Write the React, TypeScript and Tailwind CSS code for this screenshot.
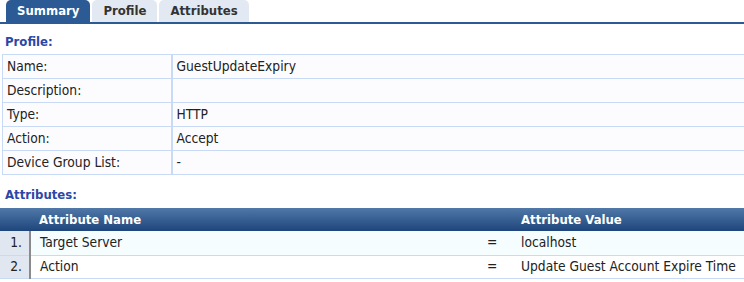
const profile = [
  { label: "Name:", value: "GuestUpdateExpiry" },
  { label: "Description:", value: "" },
  { label: "Type:", value: "HTTP" },
  { label: "Action:", value: "Accept" },
  { label: "Device Group List:", value: "-" },
];

const attributes = [
  { name: "Target Server", value: "localhost" },
  { name: "Action", value: "Update Guest Account Expire Time" },
];

const tabs = ["Summary", "Profile", "Attributes"];

export default function App() {
  return (
    <div className="w-[744px] h-[282px] overflow-hidden bg-white text-[13.7px] text-[#222] font-['DejaVu_Sans_Condensed','DejaVu_Sans',sans-serif]">
      <div className="flex items-end gap-[2px] pl-[6px] border-b-2 border-[#2b5a95] h-[24px] text-[13px]">
        {tabs.map((t, i) => (
          <div
            key={t}
            className={
              i === 0
                ? "h-[22px] px-[11px] flex items-center rounded-t-[5px] bg-[#2b5a95] text-white font-bold"
                : "h-[22px] px-[11px] flex items-center rounded-t-[5px] bg-[#e3e9f2] text-[#333] font-bold"
            }
          >
            {t}
          </div>
        ))}
      </div>

      <div className="pl-[5px] pt-[8px] h-[30px] font-bold text-[13px] text-[#2a48a6]">Profile:</div>

      <table className="ml-[2px] w-[742px] border-collapse bg-[#fcfcff]">
        <tbody>
          {profile.map((r) => (
            <tr key={r.label} className="h-[24px]">
              <td className="w-[169px] pl-[4px] border border-[#c9daf6] border-r-2">{r.label}</td>
              <td className="pl-[4px] border-y border-[#c9daf6]">{r.value}</td>
            </tr>
          ))}
        </tbody>
      </table>

      <div className="pl-[5px] pt-[10px] h-[33px] font-bold text-[13px] text-[#2a48a6]">Attributes:</div>

      <table className="w-[744px] border-collapse">
        <thead>
          <tr className="h-[23px] bg-gradient-to-b from-[#5078a8] to-[#1f467c] text-white text-[13px]">
            <th className="w-[30px]"></th>
            <th className="text-left pl-[9px] font-bold">Attribute Name</th>
            <th className="w-[34px]"></th>
            <th className="w-[223px] text-left font-bold">Attribute Value</th>
          </tr>
        </thead>
        <tbody>
          {attributes.map((a, i) => (
            <tr
              key={a.name}
              className={i === 0 ? "h-[24px] bg-[#f5fdff] border-b border-[#c9daf6]" : "h-[23px] bg-white border-b border-[#c9daf6]"}
            >
              <td className="bg-[#e0e7f1] text-right pr-[7px] border-r-2 border-[#8a8a8a]">{i + 1}.</td>
              <td className="pl-[9px]">{a.name}</td>
              <td className="text-left">=</td>
              <td className="whitespace-nowrap">{a.value}</td>
            </tr>
          ))}
        </tbody>
      </table>
    </div>
  );
}
